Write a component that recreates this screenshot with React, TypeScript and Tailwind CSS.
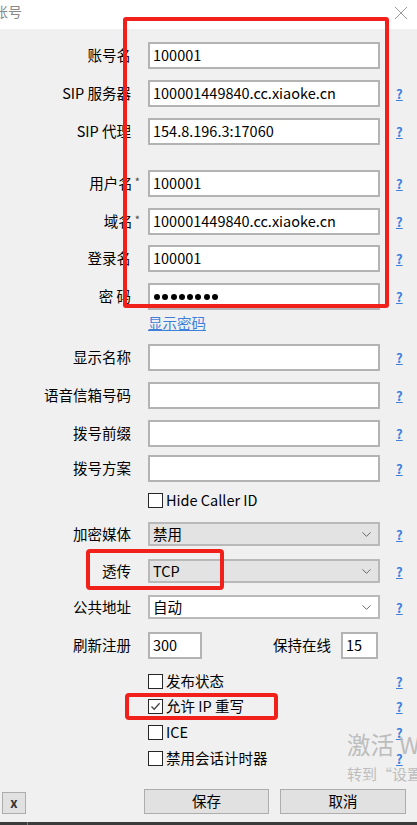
import { ChevronDown } from "lucide-react";
import type { ReactNode } from "react";

const font = "font-['Noto_Sans_CJK_SC','Noto_Sans',sans-serif]";

function Help({ show = true }: { show?: boolean }) {
  return (
    <span
      className={`ml-[16px] w-[8px] shrink-0 text-[13px] font-bold leading-none text-[#3f7fdc] underline ${
        show ? "" : "invisible"
      }`}
    >
      ?
    </span>
  );
}

function Row({
  mt,
  h = "h-[27px]",
  label,
  star,
  help = true,
  children,
}: {
  mt: string;
  h?: string;
  label?: string;
  star?: boolean;
  help?: boolean;
  children: ReactNode;
}) {
  return (
    <div className={`flex shrink-0 items-center ${mt} ${h}`}>
      <div className="w-[131px] shrink-0 text-right text-[14.5px] leading-none text-black">
        {label}
        {star && (
          <span className="-mr-[9px] ml-[2px] inline-block align-top text-[11px] leading-none text-[#444]">
            *
          </span>
        )}
      </div>
      <div className="ml-[17px] flex h-full w-[232px] shrink-0 items-center">
        {children}
      </div>
      <Help show={help} />
    </div>
  );
}

function TextBox({ value, w = "w-full" }: { value?: string; w?: string }) {
  return (
    <div
      className={`flex h-full ${w} items-center border-2 border-[#b3b3b3] bg-white pl-[3px] text-[14.5px] leading-none text-black`}
    >
      {value}
    </div>
  );
}

function Select({ value, white }: { value: string; white?: boolean }) {
  return (
    <div
      className={`flex h-full w-full items-center justify-between border-2 border-[#b9b9b9] pl-[3px] pr-[4px] text-[14.5px] leading-none text-black ${
        white ? "border-[#adadad] bg-white" : "bg-[#e3e3e3]"
      }`}
    >
      <span>{value}</span>
      <ChevronDown size={15} strokeWidth={1.4} className="text-[#555]" />
    </div>
  );
}

function Check({ label, checked }: { label: string; checked?: boolean }) {
  return (
    <div className="flex items-center">
      <div className="flex h-[15px] w-[15px] items-center justify-center border border-[#262626] bg-white">
        {checked && (
          <svg width="11" height="11" viewBox="0 0 11 11">
            <path d="M1.5 5.5 L4.2 8.3 L9.6 2.2" fill="none" stroke="#444" strokeWidth="1.3" />
          </svg>
        )}
      </div>
      <span className="ml-[3px] text-[14.5px] leading-none text-black">{label}</span>
    </div>
  );
}

function Button({ label, w }: { label: string; w: string }) {
  return (
    <div
      className={`flex h-[25px] ${w} items-center justify-center border border-[#adadad] bg-[#e1e1e1] text-[14.5px] leading-none text-black`}
    >
      {label}
    </div>
  );
}

export default function App() {
  return (
    <div className={`relative flex h-[825px] w-[417px] flex-col overflow-hidden bg-[#f0f0f0] ${font}`}>
      {/* title bar */}
      <div className="flex h-[29px] shrink-0 items-start justify-between bg-white">
        <span className="-ml-[6px] mt-[4px] text-[14px] leading-none text-[#8a8a8a]">账号</span>
        <svg width="14" height="14" viewBox="0 0 14 14" className="mr-[9px] mt-[6px]">
          <path d="M1 1 L13 13 M13 1 L1 13" stroke="#9a9a9a" strokeWidth="1" />
        </svg>
      </div>

      <Row mt="mt-[13px]" label="账号名" help={false}>
        <TextBox value="100001" />
      </Row>
      <Row mt="mt-[11px]" label="SIP 服务器">
        <TextBox value="100001449840.cc.xiaoke.cn" />
      </Row>
      <Row mt="mt-[11px]" label="SIP 代理">
        <TextBox value="154.8.196.3:17060" />
      </Row>

      <Row mt="mt-[25px]" label="用户名" star>
        <TextBox value="100001" />
      </Row>
      <Row mt="mt-[11px]" label="域名" star>
        <TextBox value="100001449840.cc.xiaoke.cn" />
      </Row>
      <Row mt="mt-[10px]" label="登录名">
        <TextBox value="100001" />
      </Row>
      <Row mt="mt-[11px]" label="密 码">
        <div className="flex h-full w-full items-center gap-[2.3px] border-2 border-[#b3b3b3] bg-white pl-[4px]">
          {Array.from({ length: 8 }).map((_, i) => (
            <span key={i} className="h-[6px] w-[6px] rounded-full bg-black" />
          ))}
        </div>
      </Row>
      <Row mt="mt-[5px]" h="h-[16px]" help={false}>
        <span className="text-[14.5px] leading-none text-[#3f7fdc] underline">显示密码</span>
      </Row>

      <Row mt="mt-[13px]" label="显示名称">
        <TextBox />
      </Row>
      <Row mt="mt-[11px]" label="语音信箱号码">
        <TextBox />
      </Row>
      <Row mt="mt-[11px]" label="拨号前缀">
        <TextBox />
      </Row>
      <Row mt="mt-[8px]" label="拨号方案">
        <TextBox />
      </Row>
      <Row mt="mt-[11px]" h="h-[15px]" help={false}>
        <Check label="Hide Caller ID" />
      </Row>

      <Row mt="mt-[14px]" h="h-[24px]" label="加密媒体">
        <Select value="禁用" />
      </Row>
      <Row mt="mt-[13px]" h="h-[24px]" label="透传">
        <Select value="TCP" />
      </Row>
      <Row mt="mt-[12px]" h="h-[24px]" label="公共地址">
        <Select value="自动" white />
      </Row>
      <Row mt="mt-[13px]" label="刷新注册" help={false}>
        <TextBox value="300" w="w-[54px]" />
        <span className="ml-[71px] text-[14.5px] leading-none text-black">保持在线</span>
        <div className="ml-[10px] h-full">
          <TextBox value="15" w="w-[37px]" />
        </div>
      </Row>

      <Row mt="mt-[15px]" h="h-[15px]">
        <Check label="发布状态" />
      </Row>
      <Row mt="mt-[10px]" h="h-[15px]">
        <Check label="允许 IP 重写" checked />
      </Row>
      <Row mt="mt-[11px]" h="h-[15px]">
        <Check label="ICE" />
      </Row>
      <Row mt="mt-[11px]" h="h-[15px]">
        <Check label="禁用会话计时器" />
      </Row>

      {/* buttons */}
      <div className="mt-[23px] flex h-[25px] shrink-0 items-end">
        <div className="ml-[2px] flex h-[22px] w-[24px] items-center justify-center border border-[#adadad] bg-[#e1e1e1] pb-[2px] text-[13px] font-bold leading-none text-[#333]">
          x
        </div>
        <div className="ml-[118px] flex h-full">
          <Button label="保存" w="w-[125px]" />
          <div className="ml-[11px]">
            <Button label="取消" w="w-[126px]" />
          </div>
        </div>
      </div>

      <div className="mt-[8px] flex h-[3px] shrink-0 bg-[#3b3b3b]">
        <span className="ml-[27px] w-px bg-[#777]" />
      </div>

      {/* windows activation watermark */}
      <div className="pointer-events-none absolute left-[347px] top-[733px] whitespace-nowrap text-[#bdbdbd]">
        <div className="text-[23.5px] leading-none">激活 Windows</div>
        <div className="mt-[9px] text-[15px] leading-none">转到“设置”以激活 Windows。</div>
      </div>

      {/* red annotation frames */}
      <div className="pointer-events-none absolute left-[123px] top-[17px] h-[291px] w-[266px] rounded-[3px] border-4 border-[#f2201b]" />
      <div className="pointer-events-none absolute left-[86px] top-[549px] h-[41px] w-[138px] rounded-[4px] border-4 border-[#f2201b]" />
      <div className="pointer-events-none absolute left-[125px] top-[693px] h-[27px] w-[153px] rounded-[4px] border-4 border-[#f2201b]" />
    </div>
  );
}
